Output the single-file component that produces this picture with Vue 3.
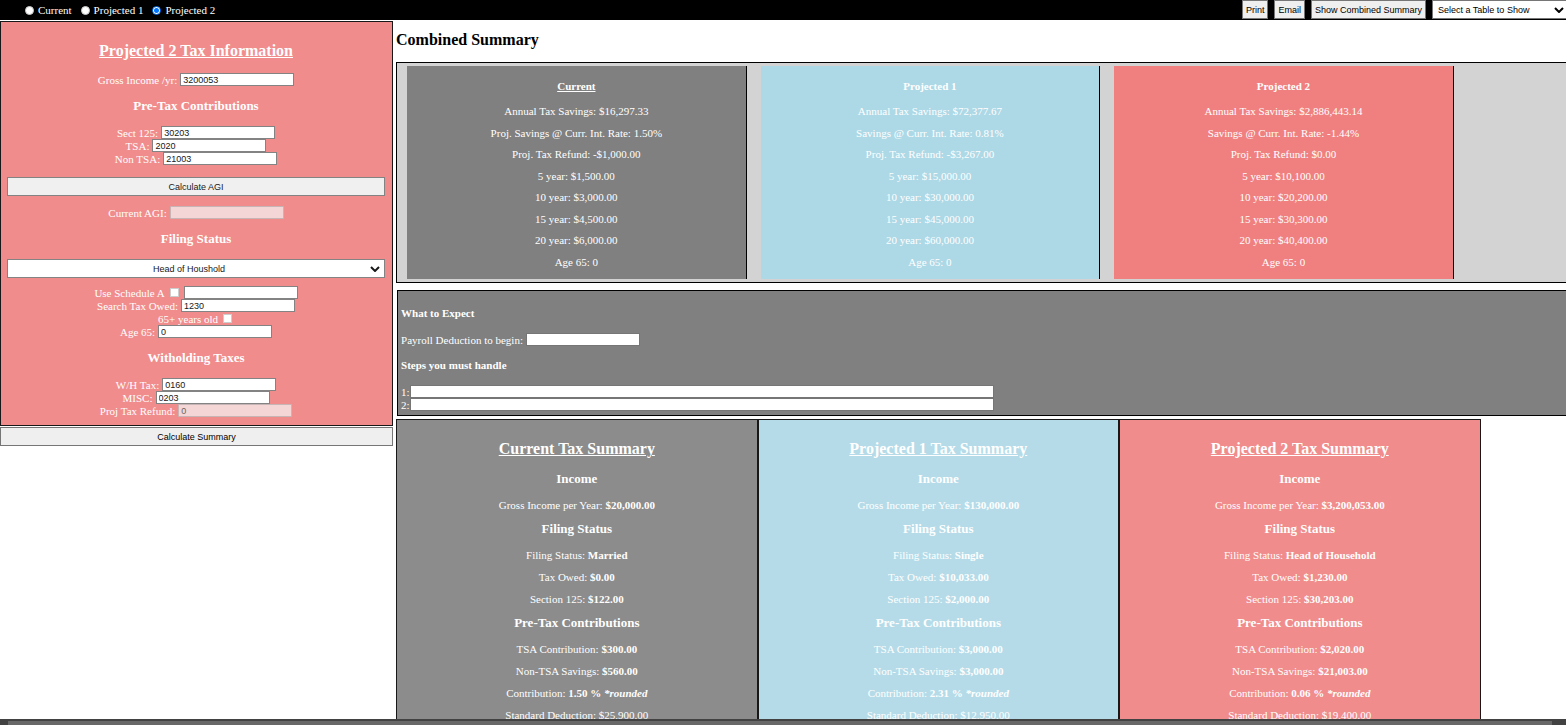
<script setup>
import { ref } from 'vue'

const scenarios = ['Current', 'Projected 1', 'Projected 2']
const active = ref('Projected 2')
const status = ref('Head of Houshold')
const tableChoice = ref('Select a Table to Show')

const combined = [
  {
    name: 'Current', tone: 'gray', underlined: true,
    lines: ['Annual Tax Savings: $16,297.33', 'Proj. Savings @ Curr. Int. Rate: 1.50%', 'Proj. Tax Refund: -$1,000.00',
      '5 year: $1,500.00', '10 year: $3,000.00', '15 year: $4,500.00', '20 year: $6,000.00', 'Age 65: 0'],
  },
  {
    name: 'Projected 1', tone: 'blue', underlined: false,
    lines: ['Annual Tax Savings: $72,377.67', 'Savings @ Curr. Int. Rate: 0.81%', 'Proj. Tax Refund: -$3,267.00',
      '5 year: $15,000.00', '10 year: $30,000.00', '15 year: $45,000.00', '20 year: $60,000.00', 'Age 65: 0'],
  },
  {
    name: 'Projected 2', tone: 'coral', underlined: false,
    lines: ['Annual Tax Savings: $2,886,443.14', 'Savings @ Curr. Int. Rate: -1.44%', 'Proj. Tax Refund: $0.00',
      '5 year: $10,100.00', '10 year: $20,200.00', '15 year: $30,300.00', '20 year: $40,400.00', 'Age 65: 0'],
  },
]

const summaries = [
  { name: 'Current', tone: 'gray', gross: '$20,000.00', status: 'Married', owed: '$0.00', sect: '$122.00', tsa: '$300.00', non: '$560.00', pct: '1.50 %', std: '$25,900.00' },
  { name: 'Projected 1', tone: 'blue', gross: '$130,000.00', status: 'Single', owed: '$10,033.00', sect: '$2,000.00', tsa: '$3,000.00', non: '$3,000.00', pct: '2.31 %', std: '$12,950.00' },
  { name: 'Projected 2', tone: 'coral', gross: '$3,200,053.00', status: 'Head of Household', owed: '$1,230.00', sect: '$30,203.00', tsa: '$2,020.00', non: '$21,003.00', pct: '0.06 %', std: '$19,400.00' },
]
</script>

<template>
  <div class="page">
    <header class="topbar">
      <div class="scenarios">
        <label v-for="s in scenarios" :key="s"><input v-model="active" type="radio" name="scenario" :value="s">{{ s }}</label>
      </div>
      <div class="actions">
        <button type="button">Print</button>
        <button type="button">Email</button>
        <button type="button">Show Combined Summary</button>
        <div class="picker">
          <select v-model="tableChoice" aria-label="Table to show"><option>Select a Table to Show</option></select>
          <svg class="chevron" viewBox="0 0 10 6" aria-hidden="true"><path d="M1 1l4 4 4-4" /></svg>
        </div>
      </div>
    </header>

    <div class="body">
      <aside class="side">
        <form class="panel coral" @submit.prevent>
          <h2>{{ active }} Tax Information</h2>
          <div class="row"><label for="gross">Gross Income /yr:</label><input id="gross" type="text" value="3200053"></div>
          <h3>Pre-Tax Contributions</h3>
          <div class="group">
            <div class="row"><label for="sect">Sect 125:</label><input id="sect" type="text" value="30203"></div>
            <div class="row"><label for="tsa">TSA:</label><input id="tsa" type="text" value="2020"></div>
            <div class="row"><label for="nontsa">Non TSA:</label><input id="nontsa" type="text" value="21003"></div>
          </div>
          <button type="button" class="wide">Calculate AGI</button>
          <div class="row"><label for="agi">Current AGI:</label><input id="agi" type="text" disabled></div>
          <h3>Filing Status</h3>
          <div class="picker filing">
            <select v-model="status" aria-label="Filing status"><option>Head of Houshold</option></select>
            <svg class="chevron" viewBox="0 0 10 6" aria-hidden="true"><path d="M1 1l4 4 4-4" /></svg>
          </div>
          <div class="group">
            <div class="row"><label for="scha">Use Schedule A</label><input id="scha" type="checkbox"><input type="text" aria-label="Schedule A amount"></div>
            <div class="row"><label for="owed">Search Tax Owed:</label><input id="owed" type="text" value="1230"></div>
            <div class="row"><label for="senior">65+ years old</label><input id="senior" type="checkbox"></div>
            <div class="row"><label for="age">Age 65:</label><input id="age" type="text" value="0"></div>
          </div>
          <h3>Witholding Taxes</h3>
          <div class="group">
            <div class="row"><label for="wh">W/H Tax:</label><input id="wh" type="text" value="0160"></div>
            <div class="row"><label for="misc">MISC:</label><input id="misc" type="text" value="0203"></div>
            <div class="row"><label for="refund">Proj Tax Refund:</label><input id="refund" type="text" value="0" disabled></div>
          </div>
        </form>
        <button type="button" class="calc">Calculate Summary</button>
      </aside>

      <main class="main">
        <h2 class="heading">Combined Summary</h2>
        <section class="combined">
          <article v-for="c in combined" :key="c.name" :class="c.tone">
            <h4 :class="{ underlined: c.underlined }">{{ c.name }}</h4>
            <div class="figures"><p v-for="l in c.lines" :key="l">{{ l }}</p></div>
          </article>
        </section>

        <section class="expect">
          <h4>What to Expect</h4>
          <div class="line"><label for="payroll">Payroll Deduction to begin:</label><input id="payroll" type="text"></div>
          <h4>Steps you must handle</h4>
          <div>
            <div class="line step"><label for="step1">1:</label><input id="step1" type="text"></div>
            <div class="line step"><label for="step2">2:</label><input id="step2" type="text"></div>
          </div>
        </section>

        <section class="summaries">
          <article v-for="s in summaries" :key="s.name" :class="s.tone">
            <h2>{{ s.name }} Tax Summary</h2>
            <h3>Income</h3>
            <p>Gross Income per Year: <b>{{ s.gross }}</b></p>
            <h3>Filing Status</h3>
            <p>Filing Status: <b>{{ s.status }}</b></p>
            <p>Tax Owed: <b>{{ s.owed }}</b></p>
            <p>Section 125: <b>{{ s.sect }}</b></p>
            <h3>Pre-Tax Contributions</h3>
            <p>TSA Contribution: <b>{{ s.tsa }}</b></p>
            <p>Non-TSA Savings: <b>{{ s.non }}</b></p>
            <p>Contribution: <b>{{ s.pct }} <i>*rounded</i></b></p>
            <p>Standard Deduction: {{ s.std }}</p>
          </article>
        </section>
      </main>
    </div>

    <div class="scroller"><div class="thumb"></div></div>
  </div>
</template>

<style>
body {
  margin: 0;
  overflow: hidden;
}
</style>

<style scoped>
.page {
  display: flex;
  flex-direction: column;
  height: 100vh;
  overflow: hidden;
  background: #fff;
  color: #fff;
  font: 11px/12px "Liberation Serif", "Times New Roman", serif;
}
* {
  box-sizing: border-box;
}
h2, h3, h4, p {
  margin: 0;
}
h2 {
  font-size: 16px;
  line-height: 18px;
}
h3 {
  font-size: 13px;
  line-height: 15px;
}
h4 {
  font-size: 11px;
  line-height: 12px;
}
.gray {
  background: gray;
}
.blue {
  background: lightblue;
}
.coral {
  background: lightcoral;
}

button, select, input {
  margin: 0;
  font: 9px/11px "Liberation Sans", Arial, sans-serif;
  color: #000;
}
button, select {
  height: 19px;
  padding: 2px 3px 0;
  border: 1px solid #767676;
  border-radius: 0;
  background: #efefef;
}
select {
  appearance: none;
  background: #fff;
}
input[type="text"] {
  width: 114px;
  height: 13px;
  padding: 0 2px;
  border: 1px solid #767676;
  border-radius: 0;
  background: #fff;
}
input[type="text"]:disabled {
  border-color: rgba(118, 118, 118, 0.4);
  border-radius: 1px;
  background: rgba(245, 245, 245, 0.7);
  color: #545454;
}
input[type="checkbox"], input[type="radio"] {
  appearance: none;
  width: 9px;
  height: 9px;
  border: 1px solid #c8c8c8;
  background: #fff;
}
input[type="checkbox"] {
  margin: 0 2px;
}
input[type="checkbox"]:checked {
  border-color: #0075ff;
  background: #0075ff;
}
input[type="radio"] {
  border-radius: 50%;
}
input[type="radio"]:checked {
  border-color: #0075ff;
  background: radial-gradient(circle, #0075ff 2px, #fff 3px);
}

.topbar {
  display: flex;
  flex: none;
  justify-content: space-between;
  height: 20px;
  background: #000;
}
.scenarios {
  display: flex;
  align-items: center;
  gap: 9px;
  padding-left: 25px;
}
.scenarios label {
  display: flex;
  align-items: center;
  gap: 4px;
}
.actions {
  display: flex;
  gap: 6px;
}
.picker {
  display: grid;
  align-items: center;
}
.picker > * {
  grid-area: 1 / 1;
}
.actions .picker {
  width: 134px;
  height: 19px;
}
.actions select {
  padding: 2px 5px 0;
  border-right: 0;
}
.chevron {
  justify-self: end;
  width: 10px;
  height: 6px;
  margin-right: 2px;
  fill: none;
  stroke: #000;
  stroke-width: 2;
  pointer-events: none;
}

.body {
  display: flex;
  flex: 1;
  gap: 3px;
  min-height: 0;
  overflow: hidden;
}
.side {
  display: flex;
  flex-direction: column;
  flex: none;
  width: 25.1%;
  padding-top: 1px;
}
.panel {
  display: flex;
  flex-direction: column;
  padding: 20px 7px 8px 6px;
  border: 1px solid #000;
  opacity: 0.9;
  text-align: center;
}
.panel h2 {
  margin-bottom: 13px;
  text-decoration: underline;
}
.panel h3 {
  margin: 12px 0 13px;
}
.row {
  display: flex;
  align-items: center;
  justify-content: center;
  gap: 3px;
  height: 13px;
}
.wide {
  margin: 12px 0 10px;
}
.filing {
  margin-bottom: 8px;
}
.filing select {
  padding: 2px 20px 0 6px;
  text-align: center;
  text-align-last: center;
}
.filing .chevron {
  margin-right: 5px;
}
.calc {
  margin-top: 1px;
}

.main {
  flex: 1;
  min-width: 0;
}
.heading {
  padding: 11px 0 13px;
  color: #000;
}
.combined {
  display: grid;
  grid-template-columns: repeat(3, 29.3%);
  gap: 14px;
  padding: 3px 0 3px 10px;
  border: 1px solid #000;
  border-right: 0;
  background: lightgray;
  text-align: center;
}
.combined article {
  padding: 14px 0 11px;
  border-right: 1px solid #000;
}
.combined h4 {
  margin-bottom: 13px;
}
.underlined {
  text-decoration: underline;
}
.figures {
  display: flex;
  flex-direction: column;
  justify-content: space-between;
  height: 163px;
}

.expect {
  margin: 7px 0 3px 1px;
  padding: 16px 0 4px 3px;
  border: 1px solid #000;
  border-right: 0;
  background: gray;
}
.expect h4 {
  margin-bottom: 14px;
}
.line {
  display: flex;
  align-items: center;
  gap: 3px;
  height: 13px;
}
.line + h4 {
  margin-top: 13px;
}
.step {
  gap: 0;
}
.step input[type="text"] {
  width: 50.2%;
}

.summaries {
  display: grid;
  grid-template-columns: repeat(3, 30.9%);
  text-align: center;
}
.summaries article {
  padding: 20px 0;
  border: 1px solid #000;
  opacity: 0.9;
}
.summaries h2 {
  margin-bottom: 13px;
  text-decoration: underline;
}
.summaries h3 {
  margin: 10px 0 13px;
}
.summaries p {
  margin-bottom: 10px;
}

.scroller {
  flex: none;
  height: 6px;
  padding: 2px 14px 0 8px;
  background: #424242;
}
.thumb {
  height: 4px;
  background: #686868;
}
</style>
